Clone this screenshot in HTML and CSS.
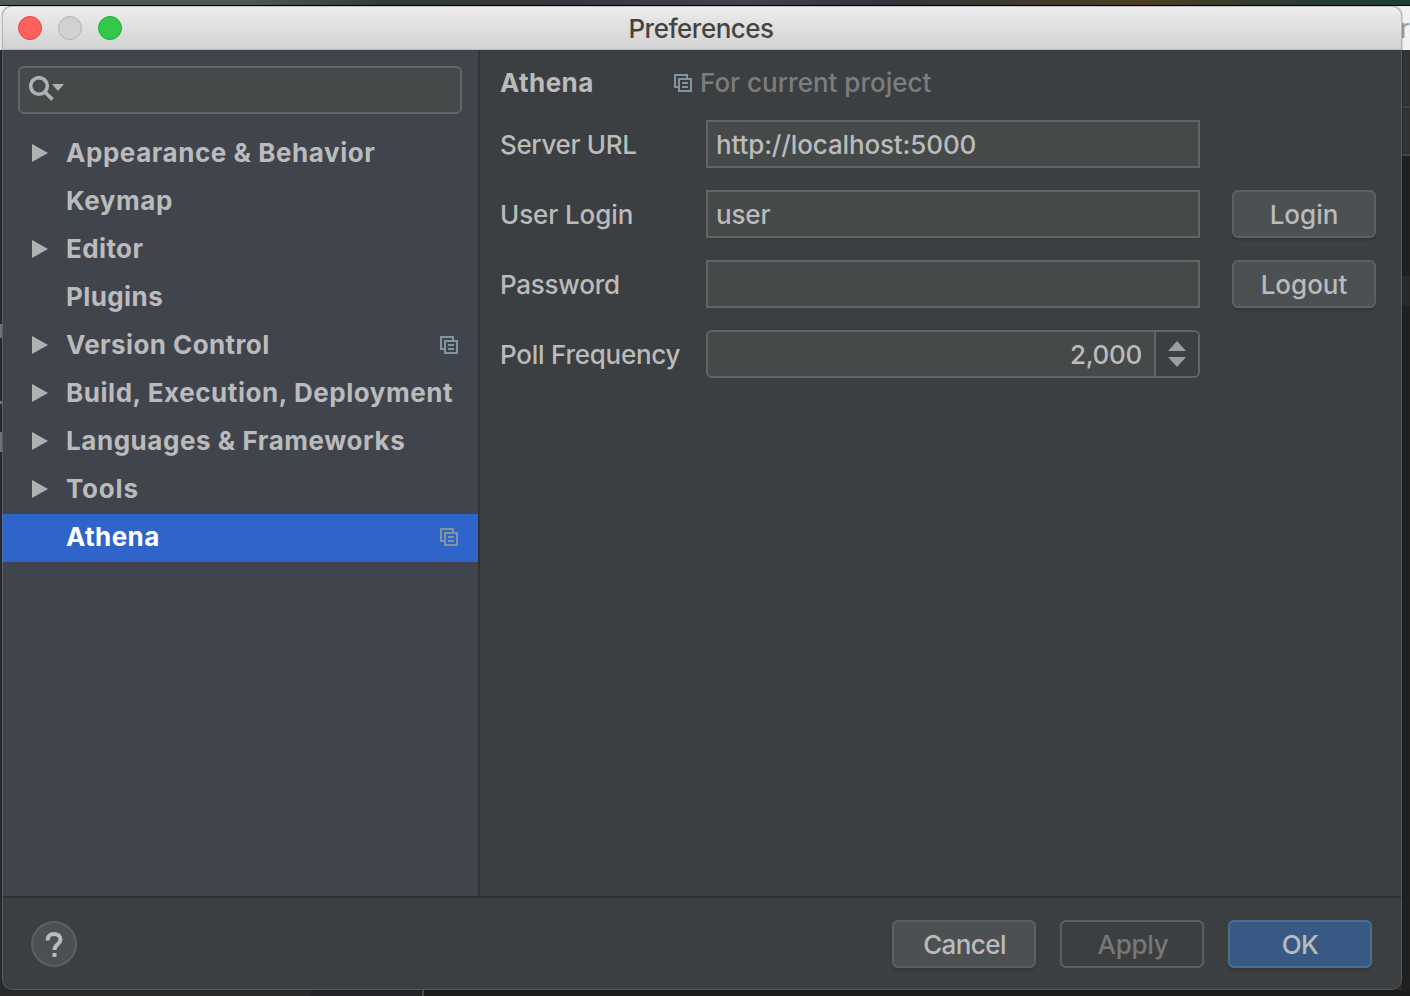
FILE: index.html
```html
<!DOCTYPE html>
<html lang="en">
<head>
<meta charset="utf-8">
<title>Preferences</title>
<link rel="stylesheet" href="styles.css">
</head>
<body>
<svg class="symbols" aria-hidden="true">
  <symbol id="project" viewBox="0 0 18 18"><path d="M0 0h14v4h-2V2H2v10h2v2H0zM4 4h14v14H4zM6 6v10h10V6zM8 8h6v2H8zM8 12h6v2H8z" fill="#8195a0" fill-rule="evenodd"/></symbol>
  <symbol id="arrow" viewBox="0 0 16 18"><path d="M0 0l16 9-16 9z" fill="#afb1b3"/></symbol>
</svg>
<div class="backdrop">
  <div class="strip"></div>
  <div class="back-title"></div>
  <span class="peek peek-title">r</span>
  <i class="peek peek-a"></i>
  <i class="peek peek-b"></i>
  <i class="peek peek-c"></i>
  <div class="back-right"></div>
  <div class="back-bottom"></div>
</div>
<main class="window">
  <header class="titlebar">
    <div class="lights"><i class="light red"></i><i class="light gray"></i><i class="light green"></i></div>
    <h1 class="title">Preferences</h1>
  </header>
  <div class="body">
    <nav class="sidebar">
      <div class="search">
        <svg width="36" height="26" viewBox="0 0 36 26"><circle cx="10" cy="10" r="8.3" fill="none" stroke="#afb1b3" stroke-width="3.6"/><path d="M16 16l7.500 7.500" stroke="#afb1b3" stroke-width="3.8"/><path d="M23 8h12l-6 7z" fill="#afb1b3"/></svg>
      </div>
      <ul class="tree">
        <li class="item"><svg class="arrow"><use href="#arrow"/></svg><span class="label">Appearance &amp; Behavior</span></li>
        <li class="item"><i class="arrow"></i><span class="label">Keymap</span></li>
        <li class="item"><svg class="arrow"><use href="#arrow"/></svg><span class="label short">Editor</span></li>
        <li class="item"><i class="arrow"></i><span class="label short">Plugins</span></li>
        <li class="item"><svg class="arrow"><use href="#arrow"/></svg><span class="label short">Version Control</span><svg class="project"><use href="#project"/></svg></li>
        <li class="item"><svg class="arrow"><use href="#arrow"/></svg><span class="label">Build, Execution, Deployment</span></li>
        <li class="item"><svg class="arrow"><use href="#arrow"/></svg><span class="label">Languages &amp; Frameworks</span></li>
        <li class="item"><svg class="arrow"><use href="#arrow"/></svg><span class="label tools">Tools</span></li>
        <li class="item selected"><i class="arrow"></i><span class="label short">Athena</span><svg class="project"><use href="#project"/></svg></li>
      </ul>
    </nav>
    <section class="content">
      <div class="heading"><h2>Athena</h2><svg class="project"><use href="#project"/></svg><span class="scope">For current project</span></div>
      <div class="form">
        <span class="caption server">Server URL</span><div class="field">http://localhost:5000</div><i></i>
        <span class="caption">User Login</span><div class="field">user</div><div class="button">Login</div>
        <span class="caption password">Password</span><div class="field"></div><div class="button">Logout</div>
        <span class="caption frequency">Poll Frequency</span>
        <div class="spinner"><span class="value">2,000</span><div class="steps"><svg width="18" height="26" viewBox="0 0 18 26"><path d="M0 10L9 0l9 10zM0 16h18l-9 10z" fill="#9a9da1"/></svg></div></div>
      </div>
    </section>
  </div>
  <footer class="footer">
    <div class="help"><svg width="18" height="25" viewBox="0 0 18 25"><path d="M2.500 8.400C2.500 4.500 5 2 9 2C13 2 15.500 4.400 15.500 7.600C15.500 12.300 9.500 12.500 9.500 18" fill="none" stroke="#bbb" stroke-width="4"/><path d="M7.500 21h4v4h-4z" fill="#bbb"/></svg></div>
    <div class="button cancel">Cancel</div>
    <div class="button disabled">Apply</div>
    <div class="button primary">OK</div>
  </footer>
</main>
</body>
</html>
```
FILE: styles.css
```css
* { box-sizing: border-box; }
body { margin: 0; width: 1410px; height: 996px; overflow: hidden; padding: 6px 8px 6px 2px; background: #2a2b2d; color: #bbb; font: 450 26px/32px Inter, sans-serif; position: relative; }
h1, h2, ul { margin: 0; padding: 0; font-size: inherit; }
span, h1, h2 { white-space: nowrap; }
svg { display: block; flex: none; }
.symbols { position: absolute; width: 0; height: 0; }
.backdrop { position: absolute; inset: 0; }
.strip { position: absolute; inset: 0 0 auto; height: 6px; border-bottom: 1px solid #000; background: linear-gradient(90deg, #4d5a52 0 17%, #333b39 27%, #34363a 38%, #42414f 53%, #30343a 63%, #4b3e21 81%, #243b35 94%, #1e3e38); }
.back-title { position: absolute; inset: 6px 0 auto; height: 44px; background: #f1f1f1; }
.back-right { position: absolute; top: 50px; right: 0; width: 8px; bottom: 0; background: linear-gradient(#303233 0 56px, #3e4042 56px 58px, #303233 58px 104px, #434547 104px 106px, #202020 106px 226px, #292929 226px 256px, #202020 256px); }
.back-bottom { position: absolute; left: 310px; right: 0; bottom: 0; height: 6px; background: linear-gradient(90deg, #242528 0 112px, #4b4c4d 112px 114px, #1d1d1d 114px); }
.peek { position: absolute; color: #999; }
.peek-title { left: 1400px; top: 13px; font-weight: 400; }
.peek-a, .peek-b, .peek-c { left: 0; width: 2px; background: #77797b; }
.peek-a { top: 324px; height: 14px; }
.peek-b { top: 401px; height: 3px; }
.peek-c { top: 432px; height: 20px; }
.window { position: relative; display: flex; flex-direction: column; height: 984px; border-radius: 10px; overflow: hidden; background: #3c3f41; box-shadow: 0 0 2px #0006; }
.window::after { content: ""; position: absolute; inset: 0; border: 1px solid #8886; border-radius: 10px; }
.titlebar { height: 44px; flex: none; display: grid; grid-template-columns: 1fr auto 1fr; align-items: center; background: linear-gradient(#ededed, #d2d2d2); border-bottom: 1px solid #bcbcbc; color: #444; }
.title { font-weight: 450; letter-spacing: -.5px; padding: 2px 2px 0 0; }
.lights { display: flex; gap: 16px; padding-left: 16px; }
.light { width: 24px; height: 24px; border-radius: 50%; border: 1px solid; }
.red { background: #ff615c; border-color: #e2463f; }
.gray { background: #d1d1d1; border-color: #b3b3b3; }
.green { background: #34c84a; border-color: #1fae2f; }
.body { height: 848px; flex: none; display: flex; border-bottom: 2px solid #323232; }
.sidebar { width: 478px; flex: none; padding-top: 16px; background: #40444d; border-right: 2px solid #323232; }
.search { margin: 0 16px; height: 48px; border: 2px solid #646464; border-radius: 6px; background: #45494a; padding: 8px 0 0 9px; }
.tree { list-style: none; padding-top: 16px; font-weight: 700; letter-spacing: .55px; }
.item { height: 48px; display: flex; align-items: center; padding: 0 20px 2px 30px; }
.arrow { width: 16px; height: 18px; margin-right: 18px; flex: none; }
.label { flex: 1; }
.short { letter-spacing: .4px; }
.tools { letter-spacing: .8px; }
.project { width: 18px; height: 18px; }
.selected { background: #2f65ca; color: #fff; }
.content { flex: 1; padding: 16px 26px 0 20px; }
.heading { height: 34px; display: flex; align-items: center; color: #7c7d7e; }
.heading h2 { width: 174px; color: #bbb; letter-spacing: .4px; }
.scope { margin-left: 8px; }
.form { display: grid; grid-template-columns: 206px 494px 176px; row-gap: 22px; padding-top: 20px; grid-auto-rows: 48px; align-items: center; }
.caption { padding-top: 2px; letter-spacing: -.1px; }
.server { letter-spacing: -.35px; }
.password { letter-spacing: -.25px; }
.frequency { letter-spacing: -.25px; }
.button { width: 144px; height: 48px; padding-top: 2px; border: 2px solid #5e6060; border-radius: 6px; background: #4c5052; display: flex; align-items: center; justify-content: center; box-shadow: 0 3px 1px #36383a; }
.form .button { margin-left: 32px; }
.cancel { letter-spacing: -.6px; padding-left: 1px; }
.field, .spinner { height: 48px; border: 2px solid #646464; background: #45494a; display: flex; align-items: center; padding: 2px 0 0 8px; letter-spacing: -.14px; }
.spinner { border-radius: 6px; padding: 0; }
.value { flex: 1; text-align: right; padding: 2px 12px 0 0; letter-spacing: -.3px; }
.steps { width: 44px; height: 44px; display: flex; align-items: center; justify-content: center; border-left: 2px solid #646464; background: #3c3f41; border-radius: 0 4px 4px 0; }
.footer { flex: 1; display: flex; align-items: flex-start; gap: 24px; padding: 22px 30px 0 29px; }
.help { width: 46px; height: 46px; margin: 1px auto 0 0; border: 2px solid #5e6060; border-radius: 50%; background: #4c5052; display: flex; align-items: center; justify-content: center; }
.disabled { background: none; color: #777; box-shadow: none; padding-left: 2px; letter-spacing: -.3px; }
.primary { background: #375983; border-color: #4c708c; letter-spacing: -.6px; }
```
